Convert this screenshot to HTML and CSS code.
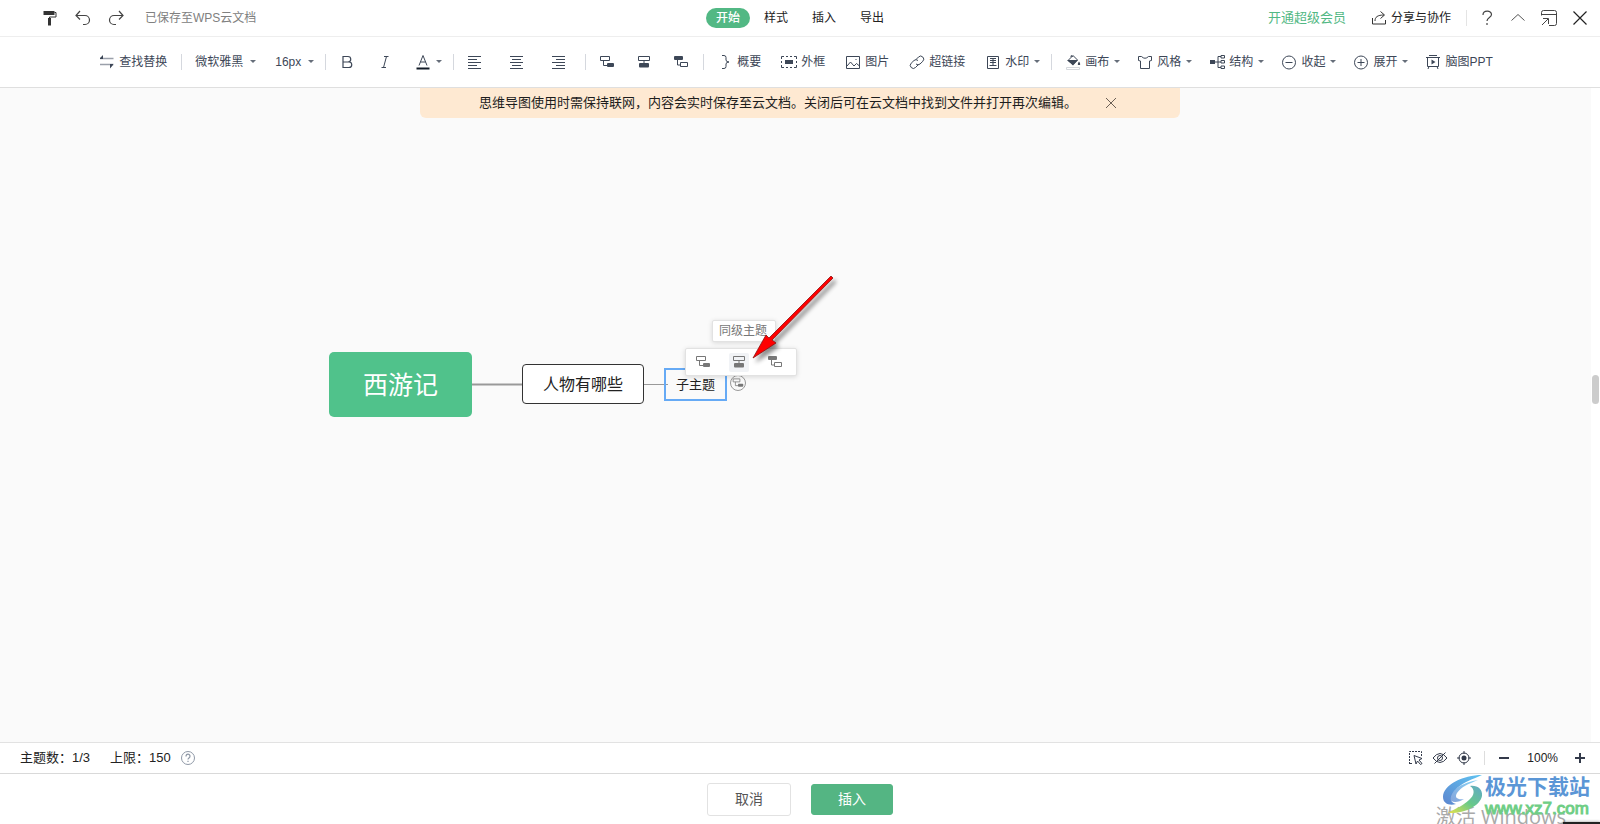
FILE: index.html
```html
<!DOCTYPE html>
<html lang="zh-CN">
<head>
<meta charset="utf-8">
<title>思维导图</title>
<link rel="stylesheet" href="styles.css">
</head>
<body>
<svg class="sprite" aria-hidden="true">
  <symbol id="caret" viewBox="0 0 8 8"><path d="M1 2h6L4 5z" fill="currentColor"/></symbol>
  <symbol id="child" viewBox="0 0 16 16"><path d="M1.500 2.500h9v4h-9zM4.500 6.500v5h3.500" fill="none" stroke="currentColor"/><rect x="8" y="9" width="7" height="4" rx="1" fill="currentColor"/></symbol>
  <symbol id="sibling" viewBox="0 0 16 16"><path d="M2.500 2.500h11v4h-11zM8 6.500v3" fill="none" stroke="currentColor"/><rect x="3" y="9" width="10" height="4.500" rx="1" fill="currentColor"/></symbol>
  <symbol id="parent" viewBox="0 0 16 16"><rect x="1" y="2" width="9" height="4" rx="1" fill="currentColor"/><path d="M4.500 6v5h3M7.500 8.500h7v4h-7z" fill="none" stroke="currentColor"/></symbol>
</svg>

<header class="header">
  <div class="header-left">
    <button class="icon-btn" type="button" aria-label="格式刷"><svg class="icon" viewBox="0 0 16 16"><path d="M1.500 1h11v4h-11z" fill="#333"/><path d="M12.500 2.500h1.500v4.500H7.500v3" fill="none" stroke="#333"/><path d="M6 8h3v7.500H6z" fill="#333"/></svg></button>
    <button class="icon-btn" type="button" aria-label="撤销"><svg class="icon" viewBox="0 0 16 16"><path d="M5 1 1 5.500 5 9.500M1 5.500h9a4.500 4.500 0 0 1 0 9H8" fill="none" stroke="#444" stroke-width="1.200"/></svg></button>
    <button class="icon-btn" type="button" aria-label="重做"><svg class="icon" viewBox="0 0 16 16"><path d="m11 1 4 4.500-4 4M15 5.500H6a4.500 4.500 0 0 0 0 9h2" fill="none" stroke="#444" stroke-width="1.200"/></svg></button>
    <span class="saved">已保存至WPS云文档</span>
  </div>
  <nav class="tabs">
    <button class="tab tab-active" type="button">开始</button>
    <button class="tab" type="button">样式</button>
    <button class="tab" type="button">插入</button>
    <button class="tab" type="button">导出</button>
  </nav>
  <div class="header-right">
    <a class="vip" href="#">开通超级会员</a>
    <button class="share" type="button"><svg class="icon" viewBox="0 0 16 16"><path d="M1.500 8v6h13v-4M4 11c0-4 2.500-6 9-6M9.500 1.500l4 3.500-4 3.500" fill="none" stroke="#333"/></svg>分享与协作</button>
    <span class="divider"></span>
    <div class="window-tools">
      <button class="icon-btn" type="button" aria-label="帮助"><svg class="icon" viewBox="0 0 16 16"><path d="M4 5c0-5 8.500-5 8.500-.5C12.500 7.500 8 7.500 8 11M8 13v2" fill="none" stroke="#444" stroke-width="1.200"/></svg></button>
      <button class="icon-btn" type="button" aria-label="折叠"><svg class="icon" viewBox="0 0 16 16"><path d="m1.500 10.500 6.500-6 6.500 6" fill="none" stroke="#555"/></svg></button>
      <button class="icon-btn" type="button" aria-label="还原窗口"><svg class="icon" viewBox="0 0 16 16"><path d="M.500 5.500v-3a2 2 0 0 1 2-2h11a2 2 0 0 1 2 2v11a2 2 0 0 1-2 2H8M.500 4.500h15M1 15l6-6M2 8.500h5.500V14" fill="none" stroke="#444"/></svg></button>
      <button class="icon-btn" type="button" aria-label="关闭"><svg class="icon" viewBox="0 0 16 16"><path d="m1.500 1.500 13 13M14.500 1.500l-13 13" fill="none" stroke="#222" stroke-width="1.200"/></svg></button>
    </div>
  </div>
</header>

<div class="toolbar" role="toolbar">
  <div class="group">
    <button class="tool" type="button"><svg class="icon" viewBox="0 0 16 16"><path d="M1 4.500h13.500M1 10.500h13.500" stroke="#9aa0aa" stroke-width="1.500"/><path d="M1 5V4l3-3v4zM14 10v1l-3 3.500V10z" fill="#3d4757"/></svg>查找替换</button>
  </div>
  <div class="group group-select">
    <label class="select"><select aria-label="字体"><option>微软雅黑</option></select><svg class="caret"><use href="#caret"/></svg></label>
    <label class="select"><select aria-label="字号"><option>16px</option></select><svg class="caret"><use href="#caret"/></svg></label>
  </div>
  <div class="group group-font">
    <button class="tool" type="button" aria-label="加粗"><svg class="icon" viewBox="0 0 16 16"><path d="M4 2.500h5a2.750 2.750 0 0 1 0 5.500H4zM4 8h6a2.750 2.750 0 0 1 0 5.500H4z" fill="none" stroke="currentColor" stroke-width="1.200"/></svg></button>
    <button class="tool" type="button" aria-label="斜体"><svg class="icon" viewBox="0 0 16 16"><path d="M7 2.500h4.500M4.500 13.500H9M9.500 2.500l-3 11" fill="none" stroke="currentColor"/></svg></button>
    <button class="tool" type="button" aria-label="文字颜色"><svg class="icon" viewBox="0 0 16 16"><path d="m4 11.500 4-10 4 10M5.500 8h5" fill="none" stroke="currentColor"/><path d="M1.500 13.500h13v2h-13z" fill="#111a26"/></svg><svg class="caret"><use href="#caret"/></svg></button>
  </div>
  <div class="group group-align">
    <button class="tool" type="button" aria-label="左对齐"><svg class="icon" viewBox="0 0 16 16"><path d="M1 2.500h13M1 5.500h9M1 8.500h13M1 11.500h9M1 14.500h13" stroke="currentColor"/></svg></button>
    <button class="tool" type="button" aria-label="居中"><svg class="icon" viewBox="0 0 16 16"><path d="M1 2.500h13M3 5.500h9M1 8.500h13M3 11.500h9M1 14.500h13" stroke="currentColor"/></svg></button>
    <button class="tool" type="button" aria-label="右对齐"><svg class="icon" viewBox="0 0 16 16"><path d="M1 2.500h13M5 5.500h9M1 8.500h13M5 11.500h9M1 14.500h13" stroke="currentColor"/></svg></button>
  </div>
  <div class="group group-topic">
    <button class="tool" type="button" aria-label="子主题"><svg class="icon"><use href="#child"/></svg></button>
    <button class="tool" type="button" aria-label="同级主题"><svg class="icon"><use href="#sibling"/></svg></button>
    <button class="tool" type="button" aria-label="父主题"><svg class="icon"><use href="#parent"/></svg></button>
  </div>
  <div class="group">
    <button class="tool" type="button"><svg class="icon" viewBox="0 0 16 16"><path d="M5 1.500h2q2 0 2 2V6q0 2 3 2-3 0-3 2v2.500q0 2-2 2H5" fill="none" stroke="currentColor"/></svg>概要</button>
    <button class="tool" type="button"><svg class="icon" viewBox="0 0 16 16"><path d="M.500 5V2.500H3M5 2.500h2M9 2.500h2M13 2.500h2.500V5M.500 7v2M15.500 7v2M.500 11v2.500H3M5 13.500h2M9 13.500h2M13 13.500h2.500V11" fill="none" stroke="currentColor"/><path d="M4 6h8v4H4z" fill="currentColor"/></svg>外框</button>
    <button class="tool" type="button"><svg class="icon" viewBox="0 0 16 16"><path d="M1.500 2.500h13v12h-13zM2 12l3.500-4 3.500 4 2.500-2.500L14.500 12M10.500 5.500h1" fill="none" stroke="currentColor"/></svg>图片</button>
    <button class="tool" type="button"><svg class="icon" viewBox="0 0 16 16"><path d="M7 5.500 9.500 3a3 3 0 0 1 4.300 4.300L11 10a3 3 0 0 1-4 0M9.500 10.500 6.500 13.500a3 3 0 0 1-4.300-4.300L5 6.500a3 3 0 0 1 4 0" fill="none" stroke="currentColor"/></svg>超链接</button>
    <button class="tool" type="button"><svg class="icon" viewBox="0 0 16 16"><path d="M2.500 2.500h11v12h-11z" fill="none" stroke="currentColor"/><path d="M5 4.500h6M5 6.500h6M5 8.500h6M4.500 11.500h7M8 4v8" stroke="currentColor"/></svg>水印<svg class="caret"><use href="#caret"/></svg></button>
  </div>
  <div class="group group-tight">
    <button class="tool" type="button"><svg class="icon" viewBox="0 0 16 16"><path d="M3 6.500 8 1.500 12.500 6 8 10.500z" fill="none" stroke="currentColor"/><path d="M2 6h11L8 11.500zM14 7.500q2.500 3.500 0 3.500t0-3.500zM5 2.500l1.500-1.500 2 2z" fill="currentColor"/><path d="M1.500 13.500h13v2h-13z" fill="#fff" stroke="#d5d8dd"/></svg>画布<svg class="caret"><use href="#caret"/></svg></button>
    <button class="tool" type="button"><svg class="icon" viewBox="0 0 16 16"><path d="M1.500 2.500h3q3.500 3.500 7 0h3v4l-2 .5v7.500h-9V7l-2-.5z" fill="none" stroke="currentColor"/></svg>风格<svg class="caret"><use href="#caret"/></svg></button>
    <button class="tool" type="button"><svg class="icon" viewBox="0 0 16 16"><path d="M1 6h5v4H1z" fill="currentColor"/><path d="M6 8h6M12 2.500H9v11h3M12 1.500h3.500v2.500H12zM12 6.500h3.500V9H12zM12 12h3.500v2.500H12z" fill="none" stroke="currentColor"/></svg>结构<svg class="caret"><use href="#caret"/></svg></button>
    <button class="tool" type="button"><svg class="icon" viewBox="0 0 16 16"><circle cx="8" cy="8.500" r="6.500" fill="none" stroke="currentColor"/><path d="M4.500 8.500h7" stroke="currentColor"/></svg>收起<svg class="caret"><use href="#caret"/></svg></button>
    <button class="tool" type="button"><svg class="icon" viewBox="0 0 16 16"><circle cx="8" cy="8.500" r="6.500" fill="none" stroke="currentColor"/><path d="M4.500 8.500h7M8 5v7" stroke="currentColor"/></svg>展开<svg class="caret"><use href="#caret"/></svg></button>
    <button class="tool" type="button"><svg class="icon" viewBox="0 0 16 16"><path d="M4 1.500h8M1 3.500h14M2.500 3.500v9h11v-9M4 12.500 3 15M12 12.500l1 2.500" fill="none" stroke="currentColor"/><path d="m6.500 5.500 4 2.500-4 2.500z" fill="currentColor"/></svg>脑图PPT</button>
  </div>
</div>

<main class="workspace">
  <div class="canvas">
    <svg class="links" aria-hidden="true"><path d="M472 296.500h51" stroke="#999" stroke-width="2"/><path d="M644 296.500h24" stroke="#999"/></svg>
    <div class="node node-root">西游记</div>
    <div class="node node-topic">人物有哪些</div>
    <div class="node node-sub">子主题</div>
    <button class="add" type="button" aria-label="添加主题"><svg viewBox="0 0 16 16"><use href="#child"/></svg></button>
    <div class="popup">
      <button class="popup-btn" type="button" aria-label="子主题"><svg class="icon"><use href="#child"/></svg></button>
      <button class="popup-btn popup-hover" type="button" aria-label="同级主题"><svg class="icon"><use href="#sibling"/></svg></button>
      <button class="popup-btn" type="button" aria-label="父主题"><svg class="icon"><use href="#parent"/></svg></button>
    </div>
    <div class="tooltip" role="tooltip">同级主题</div>
    <svg class="arrow" viewBox="0 0 90 92" aria-hidden="true"><path d="M82 4 84 6 23 68 27 71 4 86 17 63 20 66z" fill="#f00" stroke="#8a1010" stroke-width=".8"/></svg>
  </div>
  <div class="scroll"><div class="thumb"></div></div>
  <div class="notice">
    <span>思维导图使用时需保持联网，内容会实时保存至云文档。关闭后可在云文档中找到文件并打开再次编辑。</span>
    <button class="notice-close" type="button" aria-label="关闭提示"><svg viewBox="0 0 12 12"><path d="m1 1 10 10M11 1 1 11" stroke="#6b5f55"/></svg></button>
  </div>
</main>

<div class="status">
  <span>主题数：1/3</span>
  <span>上限：150</span>
  <button class="help" type="button" aria-label="说明"><svg viewBox="0 0 14 14"><circle cx="7" cy="7" r="6.500" fill="none" stroke="#8f98a6"/><path d="M5 5.500c0-3 4-3 4-.3C9 7 7 6.800 7 8.500M7 9.700V11" fill="none" stroke="#8f98a6" stroke-width="1.200"/></svg></button>
  <div class="view-tools">
    <button class="view-btn" type="button" aria-label="框选"><svg class="icon" viewBox="0 0 16 16"><path d="M1.500 14V1.500h12V6M2 13.500h3" fill="none" stroke="currentColor" stroke-dasharray="2 1"/><path d="m6 5.500 8 3-3 1.500 3 3.500-1.500 1-3-3.500L8 14z" fill="none" stroke="currentColor"/></svg></button>
    <button class="view-btn" type="button" aria-label="隐藏"><svg class="icon" viewBox="0 0 16 16"><path d="M1 8q7-9 14 0-7 9-14 0zM13.500 2.500l-11 11" fill="none" stroke="currentColor"/><circle cx="8" cy="8" r="2.500" fill="none" stroke="currentColor"/></svg></button>
    <button class="view-btn" type="button" aria-label="定位"><svg class="icon" viewBox="0 0 16 16"><circle cx="8" cy="8" r="5" fill="none" stroke="currentColor"/><circle cx="8" cy="8" r="2.500" fill="currentColor"/><path d="M8 1v3M8 12v3M1 8h3M12 8h3" stroke="currentColor"/></svg></button>
  </div>
  <span class="status-divider"></span>
  <button class="zoom-btn" type="button" aria-label="缩小"><svg viewBox="0 0 12 12"><path d="M1 6h10" stroke="#333a4a" stroke-width="2"/></svg></button>
  <span class="zoom-value">100%</span>
  <button class="zoom-btn" type="button" aria-label="放大"><svg viewBox="0 0 12 12"><path d="M1 6h10M6 1v10" stroke="#333a4a" stroke-width="2"/></svg></button>
</div>

<footer class="footer">
  <button class="btn" type="button">取消</button>
  <button class="btn btn-primary" type="button">插入</button>
  <div class="activate">激活 Windows</div>
  <div class="brand">
    <svg class="brand-logo" viewBox="0 0 44 42" aria-hidden="true">
      <defs>
        <linearGradient id="g1" x1="1" y1="0" x2="0" y2="1"><stop offset="0" stop-color="#5fc4f2"/><stop offset="1" stop-color="#5d86cf"/></linearGradient>
        <linearGradient id="g2" x1="1" y1="0" x2="0" y2="1"><stop offset="0" stop-color="#5fa8c8"/><stop offset=".5" stop-color="#68c98a"/><stop offset="1" stop-color="#e6e34a"/></linearGradient>
      </defs>
      <path d="M41 1C22 1 2 11 2 23c0 7 7 9 13 7-8-2-6-10 1-16C23 8 32 5 41 1z" fill="url(#g1)"/>
      <path d="M37 6C23 8 9 16 9 24c0 5 8 5 14 1-6 1-10-1-7-6 4-6 11-9 21-13z" fill="url(#g1)" opacity=".75"/>
      <path d="M29 12c5 3 5 9-1 14-6 6-13 8-21 13 16 1 32-7 34-17 1-7-5-11-12-10z" fill="url(#g2)"/>
    </svg>
    <div class="brand-text"><strong class="brand-name">极光下载站</strong><span class="brand-url">www.xz7.com</span></div>
  </div>
  <div class="edge"></div>
</footer>
</body>
</html>
```
FILE: styles.css
```css
* { box-sizing: border-box; }

body {
  margin: 0;
  height: 100vh;
  display: flex;
  flex-direction: column;
  overflow: hidden;
  background: #fff;
  color: #222;
  font-family: "Liberation Sans", "Noto Sans CJK SC", sans-serif;
  font-size: 12px;
  line-height: 18px;
}

button, select {
  margin: 0;
  padding: 0;
  border: 0;
  background: none;
  color: inherit;
  font: inherit;
}

button svg, label svg { display: block; flex: none; }
.sprite { position: absolute; width: 0; height: 0; }
.icon { width: 16px; height: 16px; }
.caret { width: 8px; height: 8px; color: #666e7a; }

/* Title bar */
.header {
  display: grid;
  grid-template-columns: 1fr auto 1fr;
  align-items: center;
  height: 37px;
  border-bottom: 1px solid #eee;
}
.header-left { display: flex; align-items: center; gap: 13px; padding-left: 40px; }
.icon-btn { display: flex; align-items: center; justify-content: center; width: 20px; height: 20px; }
.saved { padding-left: 6px; color: #808080; }
.tabs { display: flex; gap: 4px; }
.tab { width: 44px; height: 20px; border-radius: 10px; color: #222; }
.tab-active { background: #52b884; color: #fff; font-weight: 500; }
.header-right { display: flex; align-items: center; justify-content: flex-end; padding-right: 10px; }
.vip { color: #52b884; font-size: 13px; text-decoration: none; }
.share { display: flex; align-items: center; gap: 4px; margin-left: 25px; }
.divider { width: 1px; height: 16px; margin: 0 10px 0 15px; background: #e4e4e4; }
.window-tools { display: flex; gap: 11px; }

/* Toolbar */
.toolbar {
  display: flex;
  align-items: center;
  justify-content: center;
  height: 51px;
  padding-right: 8px;
  border-bottom: 1px solid #dfdfdf;
  color: #3d4757;
}
.group { display: flex; align-items: center; gap: 20px; padding-right: 10px; }
.group + .group { padding-left: 14px; background: linear-gradient(#d5d8de, #d5d8de) left center / 1px 16px no-repeat; }
.group:first-child, .group-topic { padding-right: 14px; }
.group-select { gap: 18px; }
.group-font { gap: 22px; }
.group-align { gap: 26px; padding-right: 18px; }
.group-topic { gap: 21px; }
.group-tight { gap: 16px; padding-right: 0; }
.tool { display: flex; align-items: center; gap: 4px; white-space: nowrap; }
.select { display: flex; align-items: center; gap: 5px; }
.select select { appearance: none; }

/* Mind map */
.workspace { position: relative; display: flex; flex: 1; min-height: 0; }
.canvas { position: relative; flex: 1; overflow: hidden; background: #fafafa; }
.scroll { display: flex; align-items: center; justify-content: flex-end; width: 9px; padding-right: 1px; }
.thumb { width: 7px; height: 29px; margin-bottom: 52px; border-radius: 4px; background: #ccc; }
.notice {
  position: absolute;
  top: 0;
  left: 50%;
  display: flex;
  align-items: center;
  gap: 28px;
  width: 760px;
  height: 30px;
  padding-left: 59px;
  border-radius: 0 0 6px 6px;
  background: #fee9d2;
  color: #1d1d1d;
  font-size: 13px;
  white-space: nowrap;
  transform: translateX(-50%);
}
.notice-close { width: 12px; height: 12px; }
.links { position: absolute; top: 0; left: 0; width: 100%; height: 100%; }
.node { position: absolute; display: flex; align-items: center; justify-content: center; white-space: nowrap; }
.node-root { top: 264px; left: 329px; width: 143px; height: 65px; border-radius: 5px; background: #50c28b; color: #fff; font-size: 25px; }
.node-topic { top: 276px; left: 522px; width: 122px; height: 40px; padding-top: 2px; border: 1px solid #333; border-radius: 4px; background: #fff; font-size: 16px; }
.node-sub { top: 280px; left: 664px; width: 63px; height: 33px; border: 2px solid #66aaf5; font-size: 13px; }
.add { position: absolute; top: 287px; left: 730px; display: flex; align-items: center; justify-content: center; width: 16px; height: 16px; border: 1px solid #999; border-radius: 50%; color: #777; }
.add svg { width: 12px; height: 12px; }
.popup {
  position: absolute;
  top: 260px;
  left: 685px;
  display: flex;
  align-items: center;
  justify-content: center;
  gap: 16px;
  width: 112px;
  height: 28px;
  padding-right: 4px;
  border: 1px solid #e2e2e2;
  border-radius: 2px;
  background: #fff;
  box-shadow: 0 1px 5px rgba(0, 0, 0, .14);
  color: #777;
}
.popup-btn { display: flex; align-items: center; justify-content: center; width: 20px; height: 19px; border-radius: 2px; }
.popup-hover { background: #f1f3f6; }
.tooltip {
  position: absolute;
  top: 232px;
  left: 712px;
  padding: 1px 8px 1px 6px;
  border: 1px solid #e2e2e2;
  border-radius: 2px;
  background: #fff;
  box-shadow: 0 1px 5px rgba(0, 0, 0, .14);
  color: #777;
}
.arrow { position: absolute; top: 184px; left: 749px; width: 90px; height: 92px; filter: drop-shadow(3px 4px 2px rgba(0, 0, 0, .45)); }

/* Status bar */
.status {
  display: flex;
  align-items: center;
  height: 32px;
  padding: 0 14px 0 20px;
  border-top: 1px solid #e2e2e2;
  border-bottom: 1px solid #d9d9d9;
  font-size: 13px;
}
.status span + span { margin-left: 20px; }
.help { width: 14px; height: 14px; margin-left: 10px; }
.view-tools { display: flex; gap: 8px; margin-left: auto; color: #333a4a; }
.status-divider { width: 1px; height: 14px; margin: 0 13px 0 12px; background: #ddd; }
.zoom-btn { width: 12px; height: 12px; }
.zoom-value { margin: 0 16px 0 17px; font-size: 12px; }

/* Dialog actions */
.footer { position: relative; display: flex; justify-content: center; align-items: center; gap: 20px; height: 50px; overflow: hidden; }
.btn { width: 84px; height: 33px; border: 1px solid #e2e2e2; border-radius: 3px; background: #fff; color: #555; font-size: 14px; }
.btn-primary { width: 82px; height: 31px; border-color: #54b583; background: #54b583; color: #fff; }
.activate { position: absolute; right: 34px; bottom: -7px; color: #a9a9a9; font-family: "Open Sans", "Noto Sans CJK SC", sans-serif; font-size: 20px; line-height: 28px; white-space: nowrap; }
.brand { position: absolute; top: 0; right: 10px; display: flex; }
.brand-logo { width: 44px; height: 42px; }
.brand-text { display: flex; flex-direction: column; }
.brand-name { color: #5b96d6; font-size: 21px; line-height: 26px; }
.brand-url { color: #6fce86; font-size: 17px; line-height: 18px; -webkit-text-stroke: 1px #6fce86; }
.edge { position: absolute; right: 0; bottom: 0; width: 37px; height: 2px; background: #222; box-shadow: 0 0 3px rgba(0, 0, 0, .5); }
```
